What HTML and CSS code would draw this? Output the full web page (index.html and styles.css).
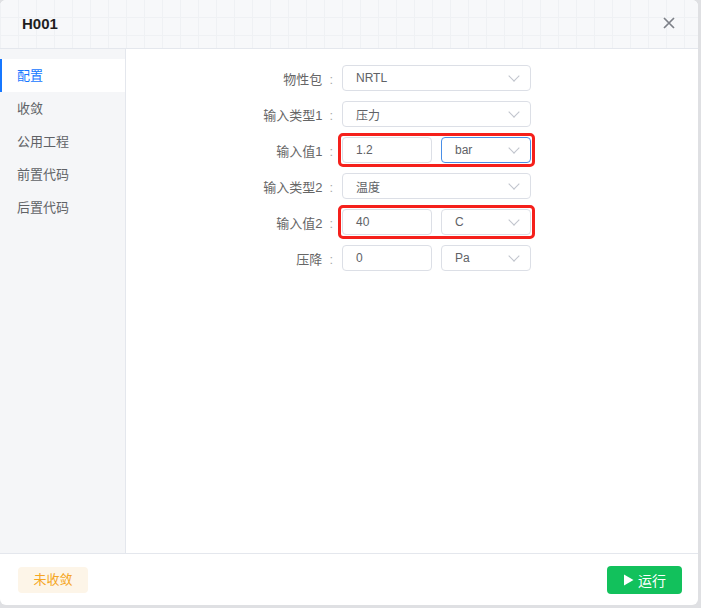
FILE: index.html
```html
<!DOCTYPE html>
<html lang="zh">
<head>
  <meta charset="UTF-8">
  <title>H001</title>
  <link rel="stylesheet" href="styles.css">
</head>
<body>
<div class="dialog">
  <div class="header">
    <span class="title">H001</span>
    <svg class="close" width="14" height="14" viewBox="0 0 14 14"><path d="M2 2L12 12M12 2L2 12" stroke="#7d8088" stroke-width="1.7" fill="none"/></svg>
  </div>

  <div class="main">
    <div class="side">
      <div class="side-item active">配置</div>
      <div class="side-item">收敛</div>
      <div class="side-item">公用工程</div>
      <div class="side-item">前置代码</div>
      <div class="side-item">后置代码</div>
    </div>

    <div class="form">
      <div class="row">
        <label class="label">物性包<span class="colon">:</span></label>
        <div class="select wide"><span>NRTL</span><i class="arrow"></i></div>
      </div>
      <div class="row">
        <label class="label">输入类型1<span class="colon">:</span></label>
        <div class="select wide"><span>压力</span><i class="arrow"></i></div>
      </div>
      <div class="row">
        <label class="label">输入值1<span class="colon">:</span></label>
        <div class="pair mark">
          <div class="input">1.2</div>
          <div class="select unit focus"><span>bar</span><i class="arrow"></i></div>
        </div>
      </div>
      <div class="row">
        <label class="label">输入类型2<span class="colon">:</span></label>
        <div class="select wide"><span>温度</span><i class="arrow"></i></div>
      </div>
      <div class="row">
        <label class="label">输入值2<span class="colon">:</span></label>
        <div class="pair mark">
          <div class="input">40</div>
          <div class="select unit"><span>C</span><i class="arrow"></i></div>
        </div>
      </div>
      <div class="row">
        <label class="label">压降<span class="colon">:</span></label>
        <div class="pair">
          <div class="input">0</div>
          <div class="select unit"><span>Pa</span><i class="arrow"></i></div>
        </div>
      </div>
    </div>
  </div>

  <div class="footer">
    <span class="tag">未收敛</span>
    <button class="run"><svg width="11" height="12" viewBox="0 0 11 12"><path d="M1 0.5L10.5 6L1 11.5Z" fill="#fff"/></svg>运行</button>
  </div>
</div>
</body>
</html>
```

FILE: styles.css
```css
body { margin: 0; background: #dfe0e3; font-family: "Liberation Sans", "Noto Sans CJK SC", sans-serif; font-size: 13px; color: #606266; }

.dialog { width: 698px; height: 605px; background: #fff; border-radius: 6px; overflow: hidden; display: flex; flex-direction: column; }

.header { height: 49px; box-sizing: border-box; flex: none; display: flex; align-items: center; justify-content: space-between; padding: 0 22px 2px 22px; border-bottom: 1px solid #e4e7ed;
  background-color: #f7f8fa;
  background-image: linear-gradient(#eff1f4 1px, transparent 1px), linear-gradient(90deg, #eff1f4 1px, transparent 1px);
  background-size: 18px 18px; background-position: 0 -1px; }
.title { font-size: 15px; font-weight: bold; color: #1f1f1f; }

.main { flex: 1; display: flex; }

.side { width: 125px; flex: none; background: #f5f6f8; border-right: 1px solid #e4e7ed; padding-top: 10px; }
.side-item { height: 33px; line-height: 33px; padding-left: 17px; color: #606266; }
.side-item.active { background: #fff; color: #1677ff; box-shadow: inset 2px 0 0 #1677ff; }

.form { flex: 1; padding-top: 16px; display: flex; flex-direction: column; gap: 10px; }
.row { display: flex; align-items: center; height: 26px; }
.label { width: 207px; text-align: right; color: #666; margin-right: 9px; }
.colon { display: inline-block; margin-left: 7px; color: #aaa; }

.select, .input { box-sizing: border-box; height: 26px; border: 1px solid #dcdfe6; border-radius: 4px; background: #fff; display: flex; align-items: center; padding: 0 13px; font-size: 12px; color: #606266; }
.select { justify-content: space-between; padding-right: 12px; }
.wide { width: 189px; }
.input, .unit { width: 90px; }
.focus { border-color: #4a8fe7; }
.arrow { width: 7px; height: 7px; border-right: 1px solid #c0c4cc; border-bottom: 1px solid #c0c4cc; transform: rotate(45deg); margin-top: -5px; }

.pair { display: flex; gap: 9px; }
.mark { outline: 3px solid #f5201b; outline-offset: 1px; border-radius: 1px; }

.footer { height: 51px; flex: none; border-top: 1px solid #e4e7ed; display: flex; align-items: center; justify-content: space-between; padding: 0 16px 0 18px; }
.tag { width: 70px; height: 26px; line-height: 26px; text-align: center; background: #fdf5e8; color: #f5a623; border-radius: 4px; font-size: 13px; }
.run { display: flex; align-items: center; gap: 4px; height: 28px; width: 75px; justify-content: center; border: none; border-radius: 4px; background: #12c15c; color: #fff; font-family: inherit; font-size: 14px; }
```
